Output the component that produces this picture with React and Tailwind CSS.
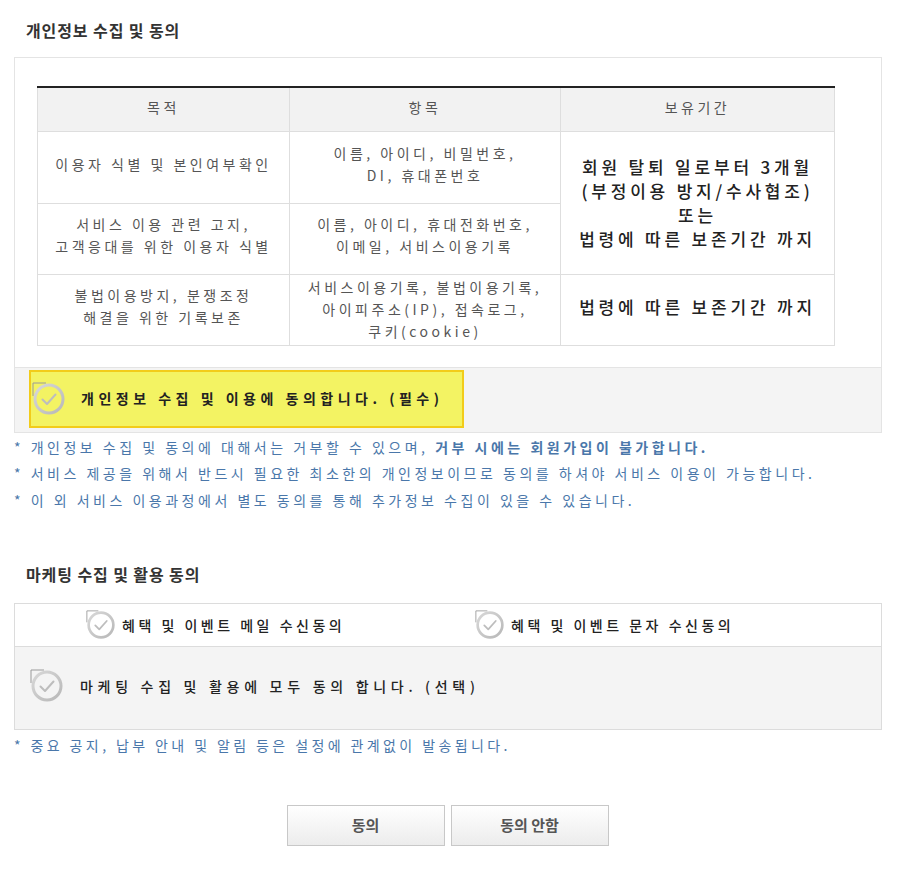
function Check({ className = '' }) {
  return (
    <svg className={className} width="34" height="34" viewBox="0 0 34 34">
      <defs>
        <linearGradient id="ring" x1="0" y1="0" x2="1" y2="1">
          <stop offset="0" stopColor="#d8d8d8" />
          <stop offset="1" stopColor="#b8b8b8" />
        </linearGradient>
      </defs>
      <path d="M1 14 V1 H14" fill="none" stroke="#9a9a9a" strokeWidth="1" />
      <circle cx="17" cy="17" r="14" fill="none" stroke="url(#ring)" strokeWidth="3" />
      <path d="M10.5 17.5 L15 22 L23.5 12.5" fill="none" stroke="#bdbdbd" strokeWidth="2" strokeLinecap="round" strokeLinejoin="round" />
    </svg>
  );
}

const font = { fontFamily: '"Noto Sans CJK KR", "Liberation Sans", sans-serif' };

export default function App() {
  const cell = 'border border-[#dedede] p-0 text-center text-[14px] leading-[22px] text-[#555] tracking-[3.5px]';
  const td = `${cell} pb-[7px]`;
  const th = `${cell} pb-[4px] font-normal border-t-2 border-t-[#222]`;
  const big = 'border border-[#dedede] p-0 text-center text-[17px] leading-[24px] font-medium text-[#222] tracking-[3.8px]';
  return (
    <div className="w-[923px] min-h-[887px] bg-white pl-[14px] pt-[20px]" style={font}>
      <h2 className="pl-[12px] text-[16px] font-bold text-[#333] leading-[20px] tracking-[0.9px]">개인정보 수집 및 동의</h2>

      <div className="mt-[17px] w-[868px] border border-[#e4e4e4]">
        <div className="pl-[22px] pt-[28px] pb-[21px]">
          <table className="w-[797px] border-collapse table-fixed">
            <colgroup>
              <col className="w-[252px]" />
              <col className="w-[271px]" />
              <col className="w-[274px]" />
            </colgroup>
            <thead>
              <tr className="h-[44px] bg-[#f2f2f2]">
                <th className={th}>목적</th>
                <th className={th}>항목</th>
                <th className={th}>보유기간</th>
              </tr>
            </thead>
            <tbody>
              <tr className="h-[72px]">
                <td className={td}>이용자 식별 및 본인여부확인</td>
                <td className={td}>이름, 아이디, 비밀번호,<br />DI, 휴대폰번호</td>
                <td rowSpan={2} className={big}>
                  회원 탈퇴 일로부터 3개월<br />(부정이용 방지/수사협조)<br />또는<br />법령에 따른 보존기간 까지
                </td>
              </tr>
              <tr className="h-[71px]">
                <td className={td}>서비스 이용 관련 고지,<br />고객응대를 위한 이용자 식별</td>
                <td className={td}>이름, 아이디, 휴대전화번호,<br />이메일, 서비스이용기록</td>
              </tr>
              <tr className="h-[71px]">
                <td className={td}>불법이용방지, 분쟁조정<br />해결을 위한 기록보존</td>
                <td className={`${cell} pb-[2px]`}>서비스이용기록, 불법이용기록,<br />아이피주소(IP), 접속로그,<br />쿠키(cookie)</td>
                <td className={`${big} pb-[6px]`}>법령에 따른 보존기간 까지</td>
              </tr>
            </tbody>
          </table>
        </div>
        <div className="h-[65px] bg-[#f4f4f4] border-t border-[#e4e4e4] pl-[14px] pt-[2px]">
          <div className="flex h-[58px] w-[435px] items-center border-2 border-[#f2cc1a] bg-[#f3f363] pl-[1px]">
            <Check />
            <span className="ml-[15px] text-[14px] font-bold tracking-[4.5px] text-[#222]">개인정보 수집 및 이용에 동의합니다. (필수)</span>
          </div>
        </div>
      </div>

      <div className="mt-[1px] text-[14px] leading-[26.5px] tracking-[3.5px] text-[#4a77aa]">
        <p>* 개인정보 수집 및 동의에 대해서는 거부할 수 있으며, <b className="font-bold">거부 시에는 회원가입이 불가합니다.</b></p>
        <p>* 서비스 제공을 위해서 반드시 필요한 최소한의 개인정보이므로 동의를 하셔야 서비스 이용이 가능합니다.</p>
        <p>* 이 외 서비스 이용과정에서 별도 동의를 통해 추가정보 수집이 있을 수 있습니다.</p>
      </div>

      <h2 className="mt-[51px] pl-[12px] text-[16px] font-bold text-[#333] leading-[20px] tracking-[0.9px]">마케팅 수집 및 활용 동의</h2>

      <div className="mt-[19px] w-[868px] border border-[#dcdcdc]">
        <div className="flex h-[42px] items-center bg-white">
          <div className="flex w-[388px] items-center pl-[71px]">
            <Check className="h-[30px] w-[30px]" />
            <span className="ml-[6px] text-[14px] font-medium tracking-[3.5px] text-[#222]">혜택 및 이벤트 메일 수신동의</span>
          </div>
          <div className="flex items-center pl-[72px]">
            <Check className="h-[30px] w-[30px]" />
            <span className="ml-[6px] text-[14px] font-medium tracking-[3.5px] text-[#222]">혜택 및 이벤트 문자 수신동의</span>
          </div>
        </div>
        <div className="flex h-[83px] items-center border-t border-[#dcdcdc] bg-[#f4f4f4] pl-[15px] pb-[4px]">
          <Check />
          <span className="ml-[16px] text-[14px] font-medium tracking-[4.7px] text-[#222]">마케팅 수집 및 활용에 모두 동의 합니다. (선택)</span>
        </div>
      </div>

      <p className="mt-[2px] text-[14px] leading-[26px] tracking-[3.4px] text-[#4a77aa]">* 중요 공지, 납부 안내 및 알림 등은 설정에 관계없이 발송됩니다.</p>

      <div className="mt-[47px] flex justify-center gap-[6px] pr-[42px]">
        <button className="h-[41px] w-[158px] border border-[#c8c8c8] bg-gradient-to-b from-white to-[#ececec] text-[15px] font-bold text-[#555]">동의</button>
        <button className="h-[41px] w-[158px] border border-[#c8c8c8] bg-gradient-to-b from-white to-[#ececec] text-[15px] font-bold text-[#555]">동의 안함</button>
      </div>
    </div>
  );
}
